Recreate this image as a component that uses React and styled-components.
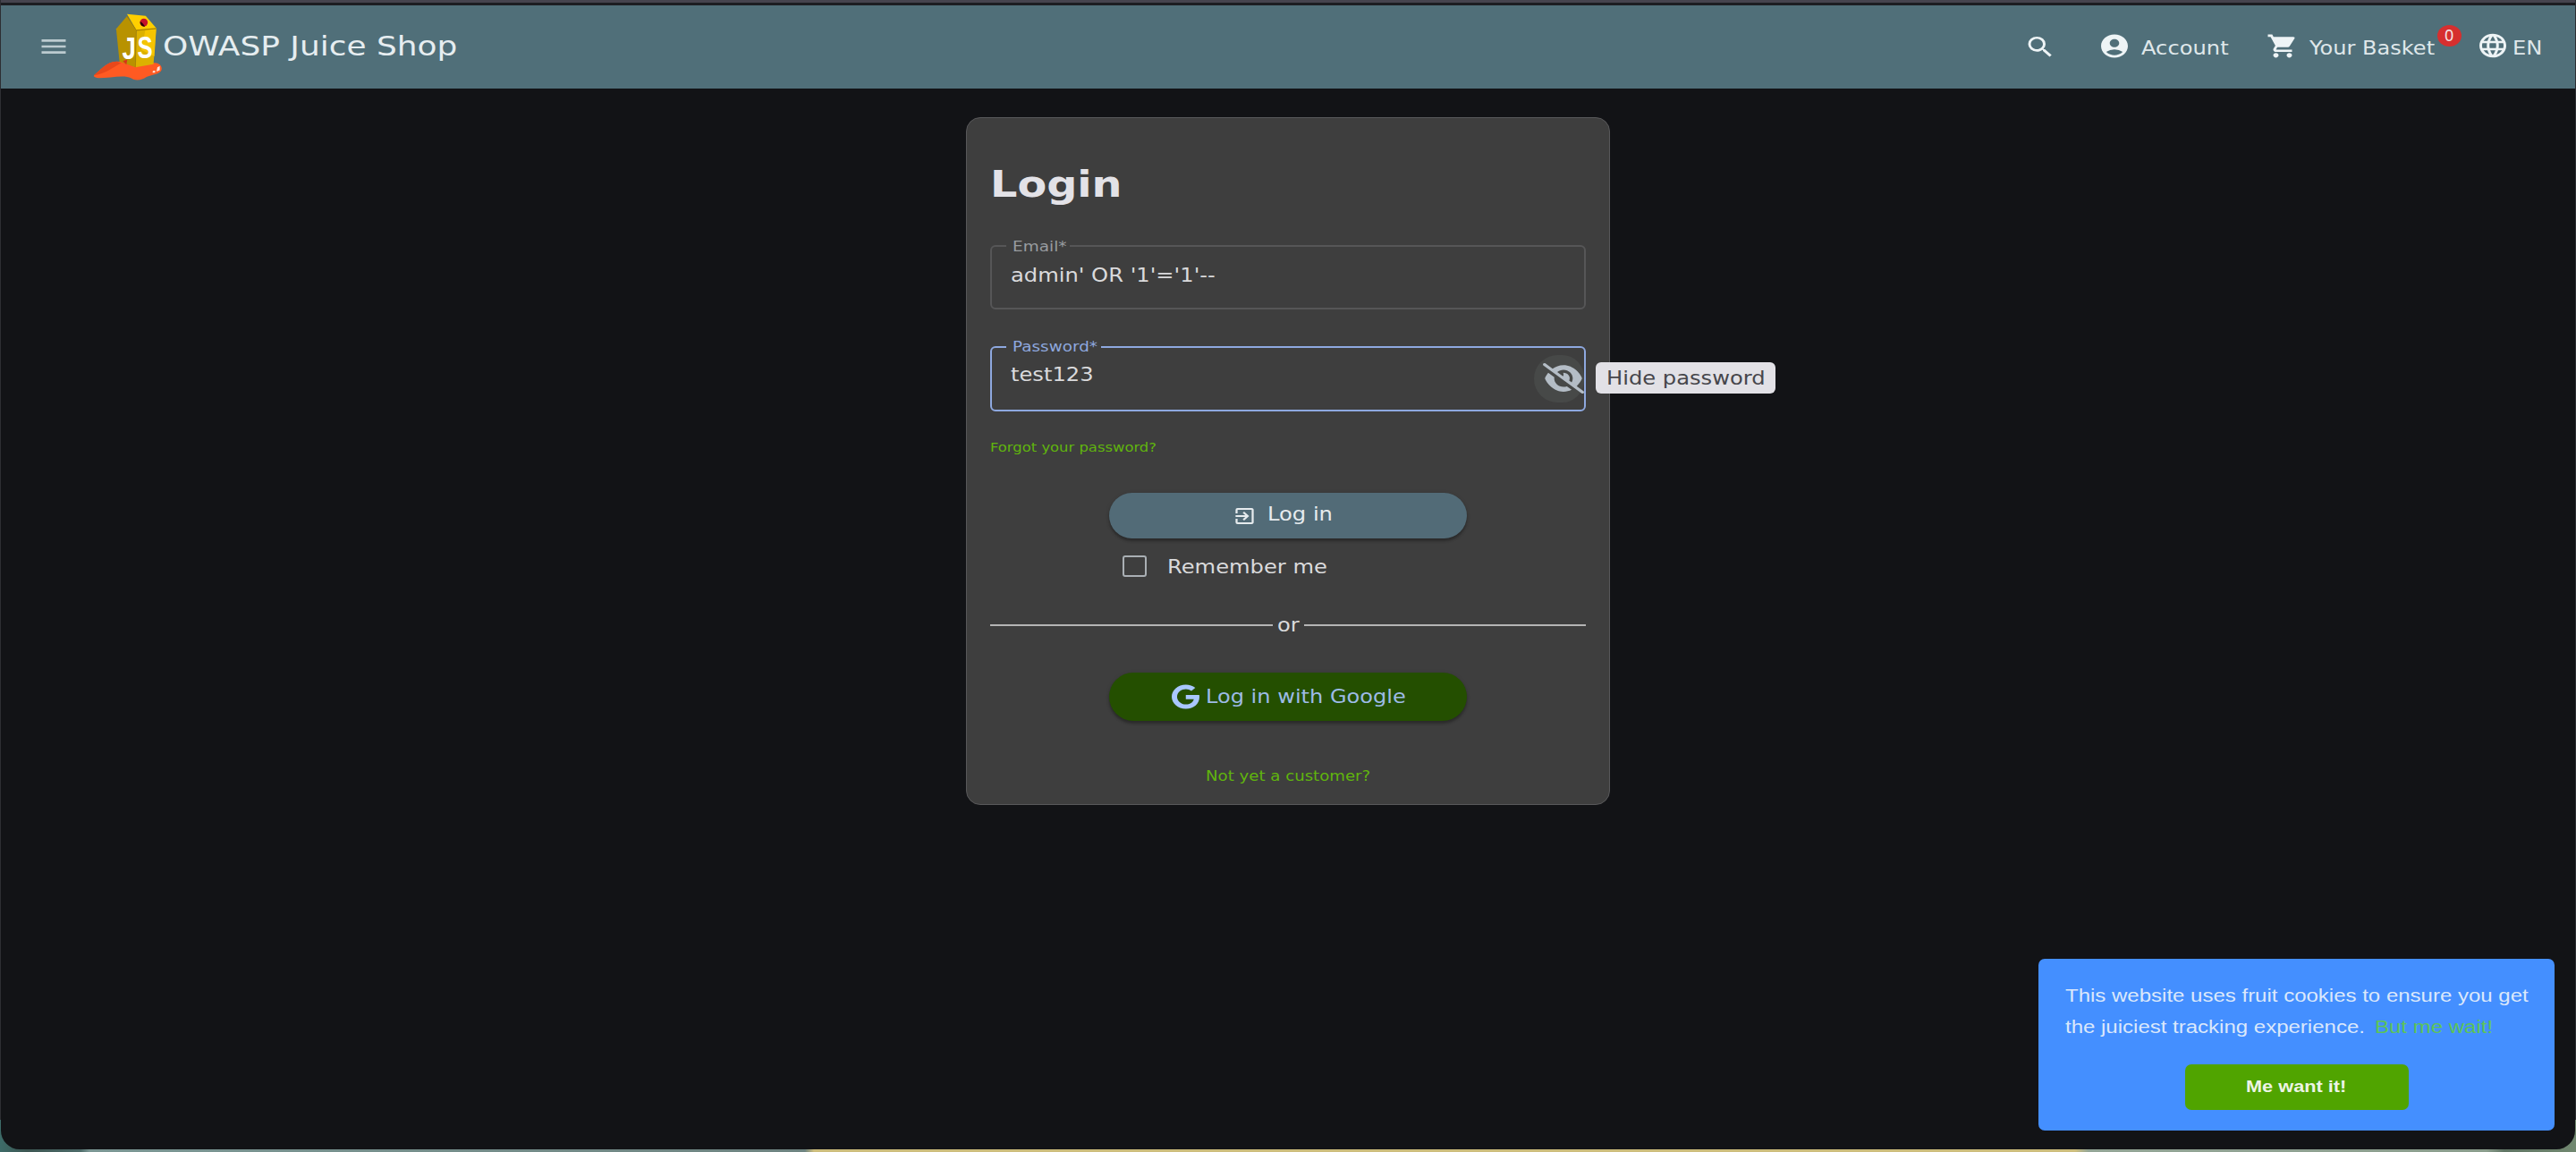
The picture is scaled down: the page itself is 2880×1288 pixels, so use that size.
import React from 'react';
import styled, { createGlobalStyle } from 'styled-components';
import {
  MdAccountCircle,
  MdExitToApp,
  MdLanguage,
  MdMenu,
  MdSearch,
  MdShoppingCart,
} from 'react-icons/md';
import { FaEyeSlash, FaGoogle } from 'react-icons/fa6';

const STRETCH = 1.163;

const GlobalStyle = createGlobalStyle`
  * {
    box-sizing: border-box;
  }

  html,
  body {
    margin: 0;
    height: 100%;
    overflow: hidden;
    background: #121316;
    font-family: 'DejaVu Sans', sans-serif;
  }
`;

const Desktop = styled.div`
  width: 100vw;
  height: 100vh;
  padding: 0 1px 3px;
  background: linear-gradient(#2d2e33, #2d2e33) 0 0 / 100% 1252px no-repeat,
    linear-gradient(
      90deg,
      #3d6b68 0,
      #3c5652 30px,
      #4c6a68 90px,
      #7b9794 100px,
      #6d8380 900px,
      #cdbd7c 910px,
      #cdbd7c 2320px,
      #93a596 2335px,
      #8a9d8c 2780px,
      #5f7463 2800px,
      #718870 100%
    );
`;

const Window = styled.div`
  display: flex;
  flex-direction: column;
  height: 100%;
  overflow: hidden;
  background: #121316;
  border-radius: 0 0 21px 21px;
`;

const WindowEdge = styled.div`
  flex: none;
  height: 6px;
  background: #1c1d22;
  border-top: 3px solid #45444e;
`;

/* wide lettering: the box keeps its drawn width in the flow */
const Text = styled.span`
  flex: none;
  display: block;
  width: ${props => props.$w / STRETCH}px;
  margin: ${props => props.$drop || 0}px ${props => props.$w - props.$w / STRETCH}px 0 0;
  transform: scaleX(${STRETCH});
  transform-origin: left center;
  white-space: pre;
  font-size: ${props => props.$size || 20.8}px;
  font-weight: ${props => (props.$bold ? 700 : 400)};
  line-height: ${props => props.$line || 24}px;
  color: ${props => props.$color || '#dadadc'};
`;

const Header = styled.header`
  flex: none;
  display: flex;
  align-items: center;
  height: 93px;
  padding: 0 37px 0 41px;
  background: #506f79;
  color: #eef4f6;
`;

const Icon = styled.span`
  flex: none;
  display: flex;
  width: ${props => props.$w || 36}px;
  height: ${props => props.$h || 31}px;
  margin-top: ${props => props.$drop || 0}px;
  color: ${props => props.$color || 'inherit'};

  svg {
    display: block;
    width: 100%;
    height: 100%;
  }
`;

const Brand = styled.div`
  display: flex;
  align-items: center;
  gap: 1px;
  margin-left: 27px;
`;

const LogoSvg = styled.svg`
  display: block;
  width: 76px;
  height: 75px;
`;

const Nav = styled.nav`
  display: flex;
  align-items: center;
  margin-left: auto;
`;

const NavItem = styled.div`
  position: relative;
  display: flex;
  align-items: center;
  gap: ${props => props.$gap || 12}px;
  margin-left: ${props => props.$space || 0}px;
`;

const Badge = styled.span`
  position: absolute;
  top: -10px;
  right: -29px;
  display: flex;
  align-items: center;
  justify-content: center;
  width: 27px;
  height: 24px;
  padding-bottom: 2px;
  border-radius: 50%;
  background: #d62f2f;
  color: #f4e4e6;
  font-family: 'Noto Sans', sans-serif;
  font-size: 18px;
  line-height: 22px;
`;

const Main = styled.main`
  display: flex;
  justify-content: center;
  padding-top: 32px;
`;

const Card = styled.section`
  display: flex;
  flex-direction: column;
  width: 720px;
  height: 769px;
  padding: 46px 26px 0;
  border: 1px solid #58585a;
  border-radius: 16px;
  background: #3e3e3e;
`;

const Field = styled.div`
  position: relative;
  flex: none;
  height: ${props => (props.$focused ? 73 : 72)}px;
  margin-top: ${props => (props.$focused ? 41 : 40)}px;
  padding: ${props => (props.$focused ? '18px 0 0 21px' : '20px 0 0 21px')};
  border: 2px solid ${props => (props.$focused ? '#8ea8df' : '#565657')};
  border-radius: 6px;
`;

const FieldLabel = styled.label`
  position: absolute;
  top: ${props => (props.$focused ? -11 : -10)}px;
  left: 16px;
  display: flex;
  padding: 0 4px 0 7px;
  background: #3e3e3e;
`;

const EyeButton = styled.div`
  position: absolute;
  top: 8px;
  right: 0;
  width: 56px;
  height: 53px;
  padding: 9px 0 0 10px;
  border-radius: 28px 26px 26px 28px;
  background: #474948;
`;

const Tooltip = styled.div`
  position: absolute;
  top: 16px;
  left: 675px;
  width: 201px;
  height: 35px;
  padding: 6px 0 0 12px;
  border-radius: 6px;
  background: #e2e1e6;
`;

const LinkRow = styled.div`
  display: flex;
  flex: none;
  justify-content: ${props => (props.$centered ? 'center' : 'flex-start')};
  margin-top: ${props => props.$space}px;
`;

const PillButton = styled.div`
  flex: none;
  align-self: center;
  display: flex;
  align-items: center;
  justify-content: center;
  gap: ${props => props.$gap}px;
  width: 400px;
  height: ${props => props.$h}px;
  margin-top: 41px;
  padding: 0 ${props => props.$right || 0}px 0 ${props => props.$left || 0}px;
  border-radius: 30px;
  background: ${props => props.$bg};
  box-shadow: 0 3px 3px rgba(0, 0, 0, 0.26), 0 1px 5px rgba(0, 0, 0, 0.14);
`;

const Remember = styled.div`
  flex: none;
  display: flex;
  align-items: center;
  gap: 23px;
  height: 24px;
  margin: 19px 0 0 148px;
`;

const Checkbox = styled.span`
  width: 27px;
  height: 24px;
  border: 2px solid #a9afb4;
  border-radius: 3px;
`;

const Divider = styled.div`
  flex: none;
  display: flex;
  align-items: center;
  gap: 5px;
  margin-top: 42px;

  &:before,
  &:after {
    content: '';
    flex: 1;
    height: 2px;
    background: #b5b5b5;
  }
`;

const CookieBox = styled.aside`
  position: fixed;
  top: 1072px;
  left: 2279px;
  display: flex;
  flex-direction: column;
  width: 577px;
  height: 192px;
  padding: 23px 30px;
  border-radius: 7px;
  background: #448fff;
  font-family: 'Liberation Sans', Arial, sans-serif;
`;

const CookieLine = styled.div`
  display: flex;
  height: ${props => props.$h}px;
`;

const CookieButton = styled.div`
  align-self: center;
  display: flex;
  align-items: center;
  justify-content: center;
  width: 250px;
  height: 51px;
  margin-top: 24px;
  padding-bottom: 1px;
  border-radius: 7px;
  background: #50a400;
`;

const Logo = () => (
  <LogoSvg viewBox="42 47 226 223" preserveAspectRatio="none">
    <path
      d="M42 253C62 238 82 208 118 207L232 211C256 209 270 220 267 234C263 249 232 251 217 258C201 268 183 274 165 262C143 250 95 262 58 262C47 261 40 258 42 253Z"
      fill="#ff5a22"
    />
    <path d="M42 253C62 238 82 208 118 207L132 212C104 228 76 249 42 253Z" fill="#e8481b" />
    <path d="M152 56L116 98L127 207L180 226L183 103Z" fill="#b89200" />
    <path d="M183 103L249 97L240 216L180 226Z" fill="#dcb100" />
    <path d="M213 102L249 98L243 190L200 168Z" fill="#f5c400" />
    <path d="M152 49L214 55L250 97L183 103Z" fill="#ffcf00" />
    <path d="M183 103L249 97" stroke="#a88400" strokeWidth="4" />
    <path d="M152 56L183 103L180 226" stroke="#9c7a00" strokeWidth="2" fill="none" />
    <circle cx="208" cy="77" r="13" fill="#c4122b" />
    <path d="M196 74A13 13 0 0 0 212 90C207 84 204 78 196 74Z" fill="#2a0508" />
    <path d="M138 205L153 200L150 217Z" fill="#d8321a" />
    <g fill="#fff" fontFamily="Liberation Sans" fontWeight="700" fontSize="107">
      <text x="136" y="199" textLength="46" lengthAdjust="spacingAndGlyphs">J</text>
      <text x="186" y="197" textLength="51" lengthAdjust="spacingAndGlyphs">S</text>
    </g>
    <path d="M253 226L261 222L261 236L250 240ZM238 238L246 237L245 244L237 244Z" fill="#ffe3dc" />
  </LogoSvg>
);

const stretched = { preserveAspectRatio: 'none' };

const App = () => {
  return (
    <Desktop>
      <GlobalStyle />
      <Window>
        <WindowEdge />
        <Header>
          <Icon $w={36} $h={32} $drop={-2} $color="#bccbd0">
            <MdMenu {...stretched} />
          </Icon>
          <Brand>
            <Logo />
            <Text $w={330} $size={30.9} $line={36} $drop={-4} $color="#e6edf0">
              OWASP Juice Shop
            </Text>
          </Brand>
          <Nav>
            <Icon>
              <MdSearch {...stretched} />
            </Icon>
            <NavItem $space={47}>
              <Icon $drop={-2}>
                <MdAccountCircle {...stretched} />
              </Icon>
              <Text $w={98} $drop={2} $color="#dfe7ea">Account</Text>
            </NavItem>
            <NavItem $space={42}>
              <Icon $drop={-2}>
                <MdShoppingCart {...stretched} />
              </Icon>
              <Text $w={141} $size={20.7} $drop={2} $color="#dfe7ea">Your Basket</Text>
              <Badge>0</Badge>
            </NavItem>
            <NavItem $space={46} $gap={4}>
              <Icon $h={32} $drop={-4}>
                <MdLanguage {...stretched} />
              </Icon>
              <Text $w={33.4} $drop={2} $color="#dfe7ea">EN</Text>
            </NavItem>
          </Nav>
        </Header>
        <Main>
          <Card>
            <Text as="h1" $w={147} $size={41} $line={56} $bold $color="#e3e2e7">
              Login
            </Text>
            <Field>
              <FieldLabel>
                <Text $w={60} $size={15.9} $line={20} $color="#989ca0">Email*</Text>
              </FieldLabel>
              <Text $w={229}>admin' OR '1'='1'--</Text>
            </Field>
            <Field $focused>
              <FieldLabel $focused>
                <Text $w={95} $size={15.8} $line={20} $color="#8ea8df">Password*</Text>
              </FieldLabel>
              <Text $w={95}>test123</Text>
              <EyeButton>
                <Icon $w={46} $h={34} $color="#b4bdc6">
                  <FaEyeSlash {...stretched} />
                </Icon>
              </EyeButton>
              <Tooltip>
                <Text $w={178} $color="#46464b">Hide password</Text>
              </Tooltip>
            </Field>
            <LinkRow $space={30}>
              <Text $w={187} $size={14.1} $line={20} $color="#60b50d">Forgot your password?</Text>
            </LinkRow>
            <PillButton $h={51} $gap={12} $right={13} $bg="#526b77">
              <Icon $w={27} $h={24} $color="#e6ebee">
                <MdExitToApp {...stretched} />
              </Icon>
              <Text $w={73} $drop={-3} $color="#e6ebee">Log in</Text>
            </PillButton>
            <Remember>
              <Checkbox />
              <Text $w={180} $drop={1}>Remember me</Text>
            </Remember>
            <Divider>
              <Text $w={25}>or</Text>
            </Divider>
            <PillButton $h={54} $gap={7} $left={2} $bg="#244f00">
              <Icon $w={31} $h={28} $color="#a9c7ff">
                <FaGoogle {...stretched} />
              </Icon>
              <Text $w={225} $size={20.7} $color="#9dbbe6">Log in with Google</Text>
            </PillButton>
            <LinkRow $space={52} $centered>
              <Text $w={184} $size={15.6} $line={20} $color="#60b50d">Not yet a customer?</Text>
            </LinkRow>
          </Card>
        </Main>
      </Window>
      <CookieBox>
        <CookieLine $h={35}>
          <Text $w={518} $size={20.65} $line={36} $color="#dbe8fb">
            This website uses fruit cookies to ensure you get
          </Text>
        </CookieLine>
        <CookieLine $h={36}>
          <Text $w={346} $size={20.65} $line={36} $color="#dbe8fb">the juiciest tracking experience. </Text>
          <Text $w={130} $size={20.65} $line={36} $color="#5dc457">But me wait!</Text>
        </CookieLine>
        <CookieButton>
          <Text $w={113} $size={18.7} $bold $color="#edf4e6">Me want it!</Text>
        </CookieButton>
      </CookieBox>
    </Desktop>
  );
};

export default App;
